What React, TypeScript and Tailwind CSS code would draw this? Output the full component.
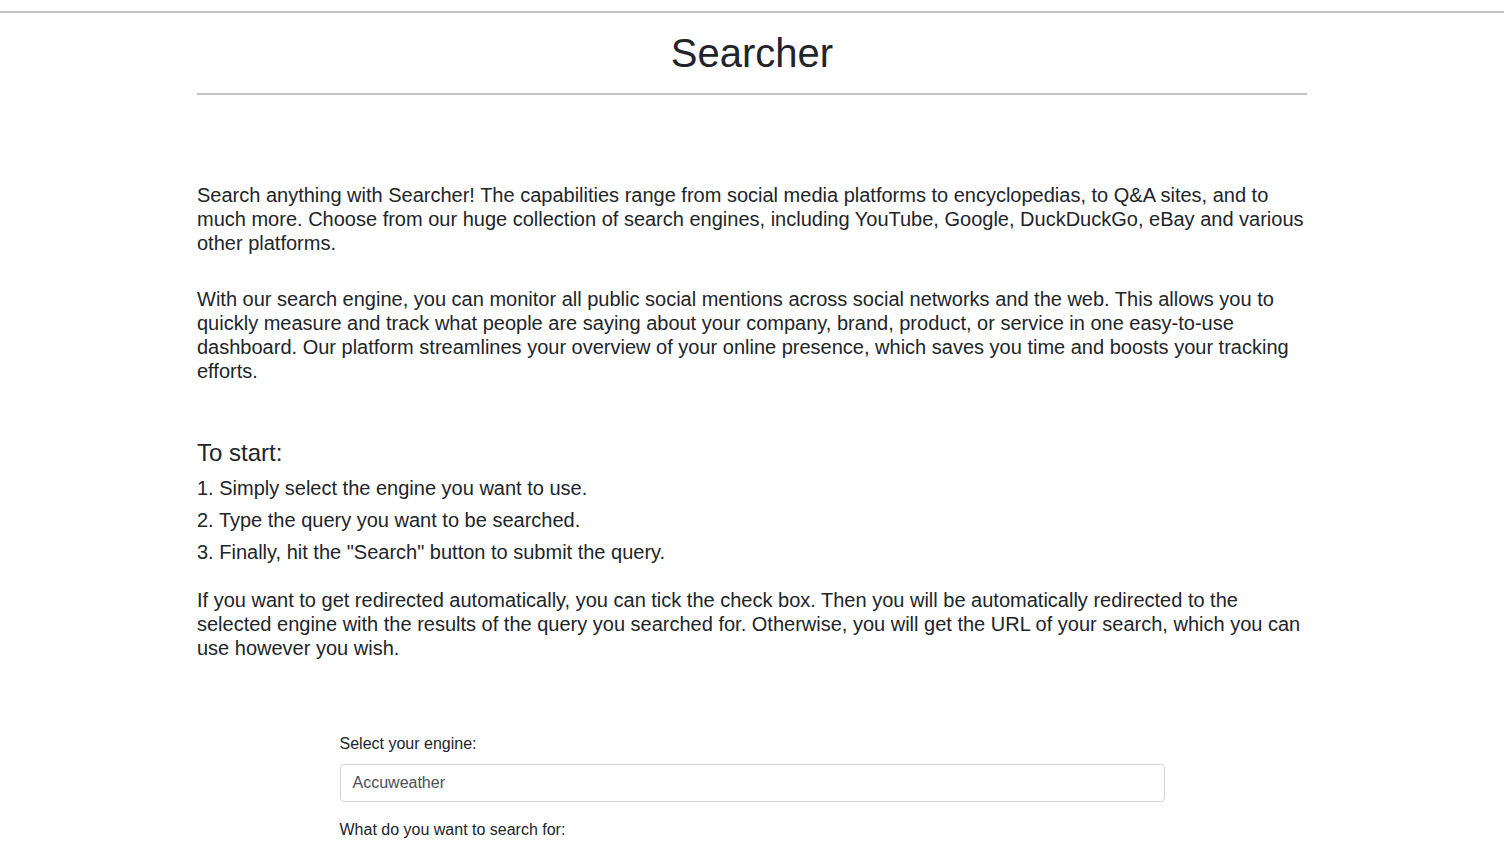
import React from "react";

const steps = [
  "1. Simply select the engine you want to use.",
  "2. Type the query you want to be searched.",
  '3. Finally, hit the "Search" button to submit the query.',
];

export default function App() {
  return (
    <div className="min-h-screen bg-white font-['Liberation_Sans',Arial,sans-serif] text-[#212529]">
      <div className="h-[11px]" />
      <div className="h-[2px] w-full bg-[#c4c4c4]" />

      <div className="mx-auto w-[1110px]">
        <h1 className="mt-[16px] text-center text-[40px] leading-[48px] font-normal">Searcher</h1>
        <div className="mt-[16px] h-[2px] w-full bg-[#c2c2c2]" />

        <p className="mt-[88px] text-[20px] leading-[24px]">
          Search anything with Searcher! The capabilities range from social media platforms to encyclopedias, to Q&amp;A
          sites, and to much more. Choose from our huge collection of search engines, including YouTube, Google,
          DuckDuckGo, eBay and various other platforms.
        </p>
        <p className="mt-[32px] text-[20px] leading-[24px]">
          With our search engine, you can monitor all public social mentions across social networks and the web. This
          allows you to quickly measure and track what people are saying about your company, brand, product, or service
          in one easy-to-use dashboard. Our platform streamlines your overview of your online presence, which saves you
          time and boosts your tracking efforts.
        </p>

        <h4 className="mt-[55px] text-[24px] leading-[29px] font-normal">To start:</h4>
        <div className="mt-[9px] flex flex-col gap-[8px]">
          {steps.map((step) => (
            <p key={step} className="text-[20px] leading-[24px]">
              {step}
            </p>
          ))}
        </div>

        <p className="mt-[24px] text-[20px] leading-[24px]">
          If you want to get redirected automatically, you can tick the check box. Then you will be automatically
          redirected to the selected engine with the results of the query you searched for. Otherwise, you will get the
          URL of your search, which you can use however you wish.
        </p>

        <form className="mx-auto mt-[72px] w-[825px] pb-10">
          <div className="mb-4">
            <label className="mb-2 block text-[16px] leading-[24px]">Select your engine:</label>
            <div className="flex h-[38px] items-center rounded-[4px] border border-[#ced4da] bg-white px-3 text-[16px] text-[#495057]">
              Accuweather
            </div>
          </div>
          <div className="mb-4">
            <label className="mb-2 block text-[16px] leading-[24px]">What do you want to search for:</label>
            <input
              type="text"
              className="h-[38px] w-full rounded-[4px] border border-[#ced4da] bg-white px-3 text-[16px] text-[#495057] outline-none"
            />
          </div>
        </form>
      </div>
    </div>
  );
}
